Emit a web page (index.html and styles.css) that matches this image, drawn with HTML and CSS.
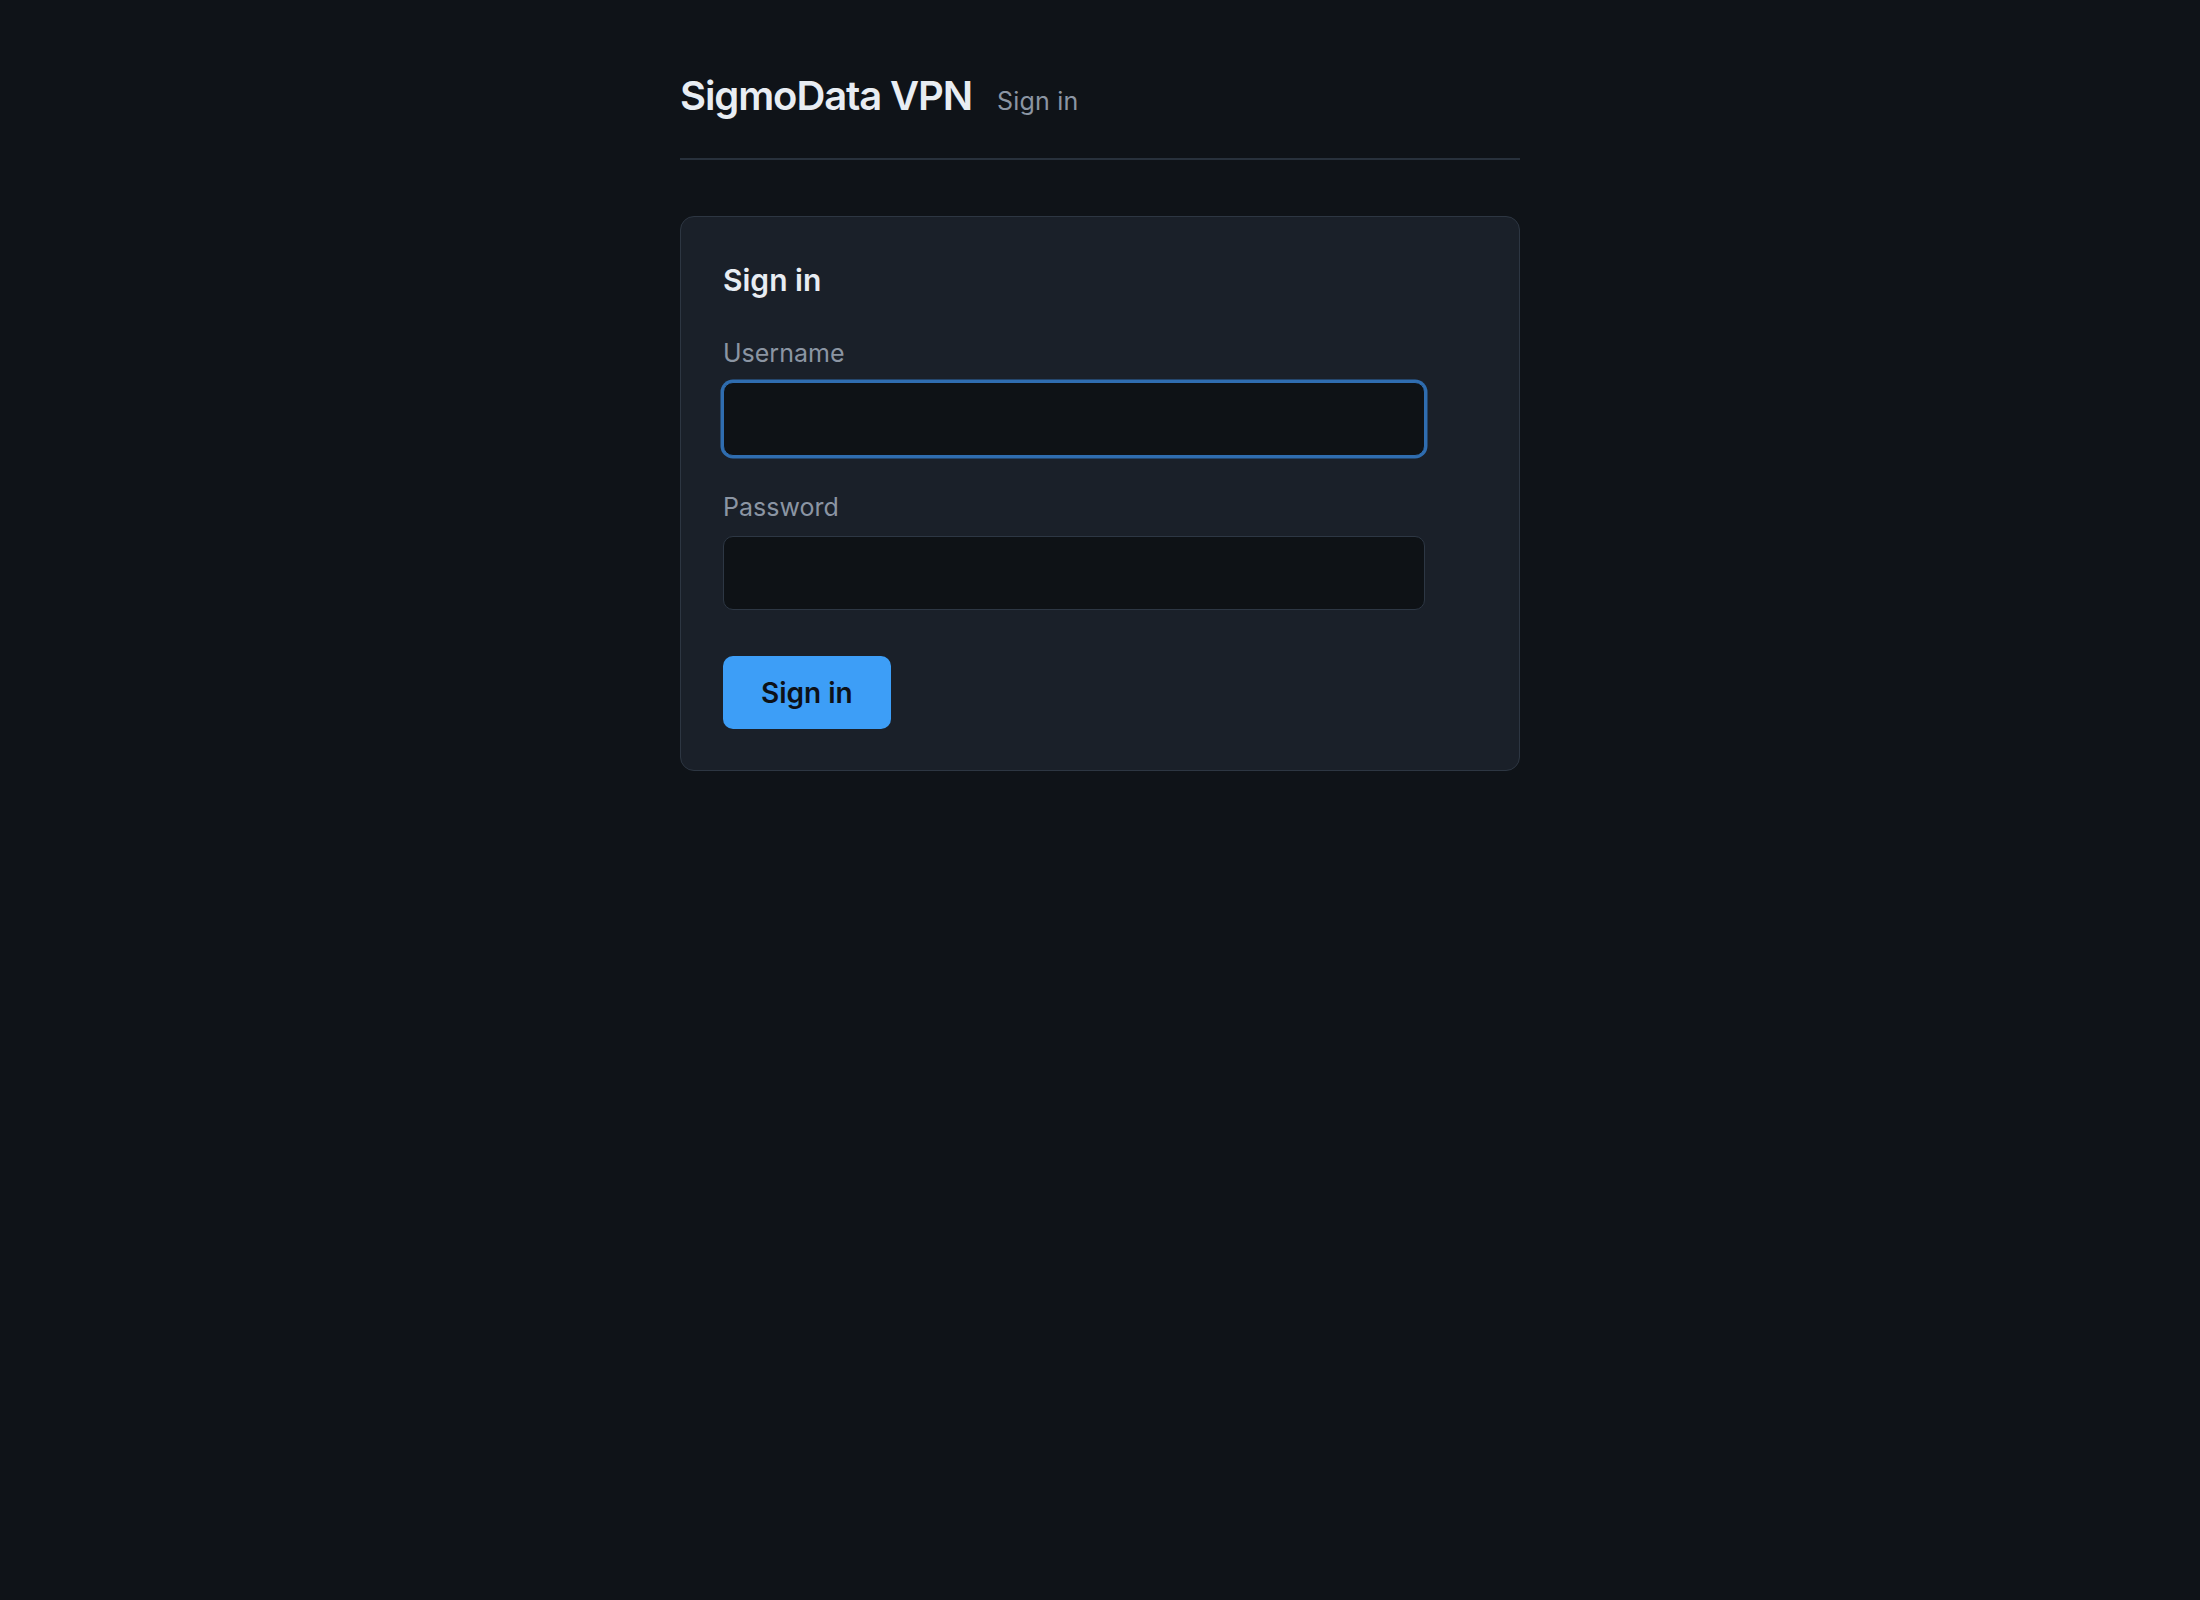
FILE: index.html
```html
<!DOCTYPE html>
<html lang="en">
<head>
<meta charset="utf-8">
<title>SigmoData VPN - Sign in</title>
<link rel="stylesheet" href="styles.css">
</head>
<body>
<div class="page">
  <header class="site-header">
    <span class="brand">SigmoData VPN</span>
    <span class="crumb">Sign in</span>
  </header>
  <main class="card">
    <h2 class="card-title">Sign in</h2>
    <form class="form">
      <label class="field-label" for="username">Username</label>
      <input class="field-input is-focused" id="username" type="text">
      <label class="field-label field-label-gap" for="password">Password</label>
      <input class="field-input" id="password" type="password">
      <button class="btn-primary" type="button">Sign in</button>
    </form>
  </main>
</div>
</body>
</html>
```

FILE: styles.css
```css
* { box-sizing: border-box; }

html, body {
  margin: 0;
  padding: 0;
  background: #0f1318;
  font-family: Inter, "Noto Sans", "Liberation Sans", sans-serif;
  color: #e6ebf1;
}

body { min-height: 1600px; }

.page {
  width: 840px;
  margin: 0 auto;
}

.site-header {
  display: flex;
  align-items: baseline;
  gap: 25px;
  padding: 71px 0 38px;
  border-bottom: 2px solid #28313c;
}

.brand {
  font-size: 40px;
  font-weight: 600;
  color: #e8edf3;
  letter-spacing: -1.1px;
}

.crumb {
  font-size: 25px;
  font-weight: 400;
  color: #8b95a3;
  letter-spacing: 0.2px;
}

.card {
  margin-top: 56px;
  background: #1a2029;
  border: 1px solid #2d3642;
  border-radius: 14px;
  padding: 42px 42px 41px 42px;
}

.card-title {
  margin: 0;
  font-size: 30px;
  line-height: 42px;
  font-weight: 600;
  color: #e8edf3;
}

.form {
  display: flex;
  flex-direction: column;
  align-items: flex-start;
  margin-top: 34px;
}

.field-label {
  font-size: 25px;
  line-height: 36px;
  color: #8b95a3;
  margin-bottom: 11px;
}

.field-label-gap { margin-top: 33px; }

.field-input {
  width: 702px;
  height: 74px;
  background: #0e1216;
  border: 1.5px solid #2d3744;
  border-radius: 10px;
  outline: none;
  color: #e6ebf1;
  font-size: 25px;
  font-family: inherit;
  padding: 0 18px;
}

.field-input.is-focused {
  border-color: #2f6db0;
  box-shadow: 0 0 0 2.5px #2f6db0;
}

.btn-primary {
  margin-top: 46px;
  height: 73px;
  padding: 0 38px;
  background: #3d9ef7;
  border: none;
  border-radius: 10px;
  color: #0d1117;
  font-family: inherit;
  font-size: 28px;
  font-weight: 600;
  cursor: pointer;
}
```
